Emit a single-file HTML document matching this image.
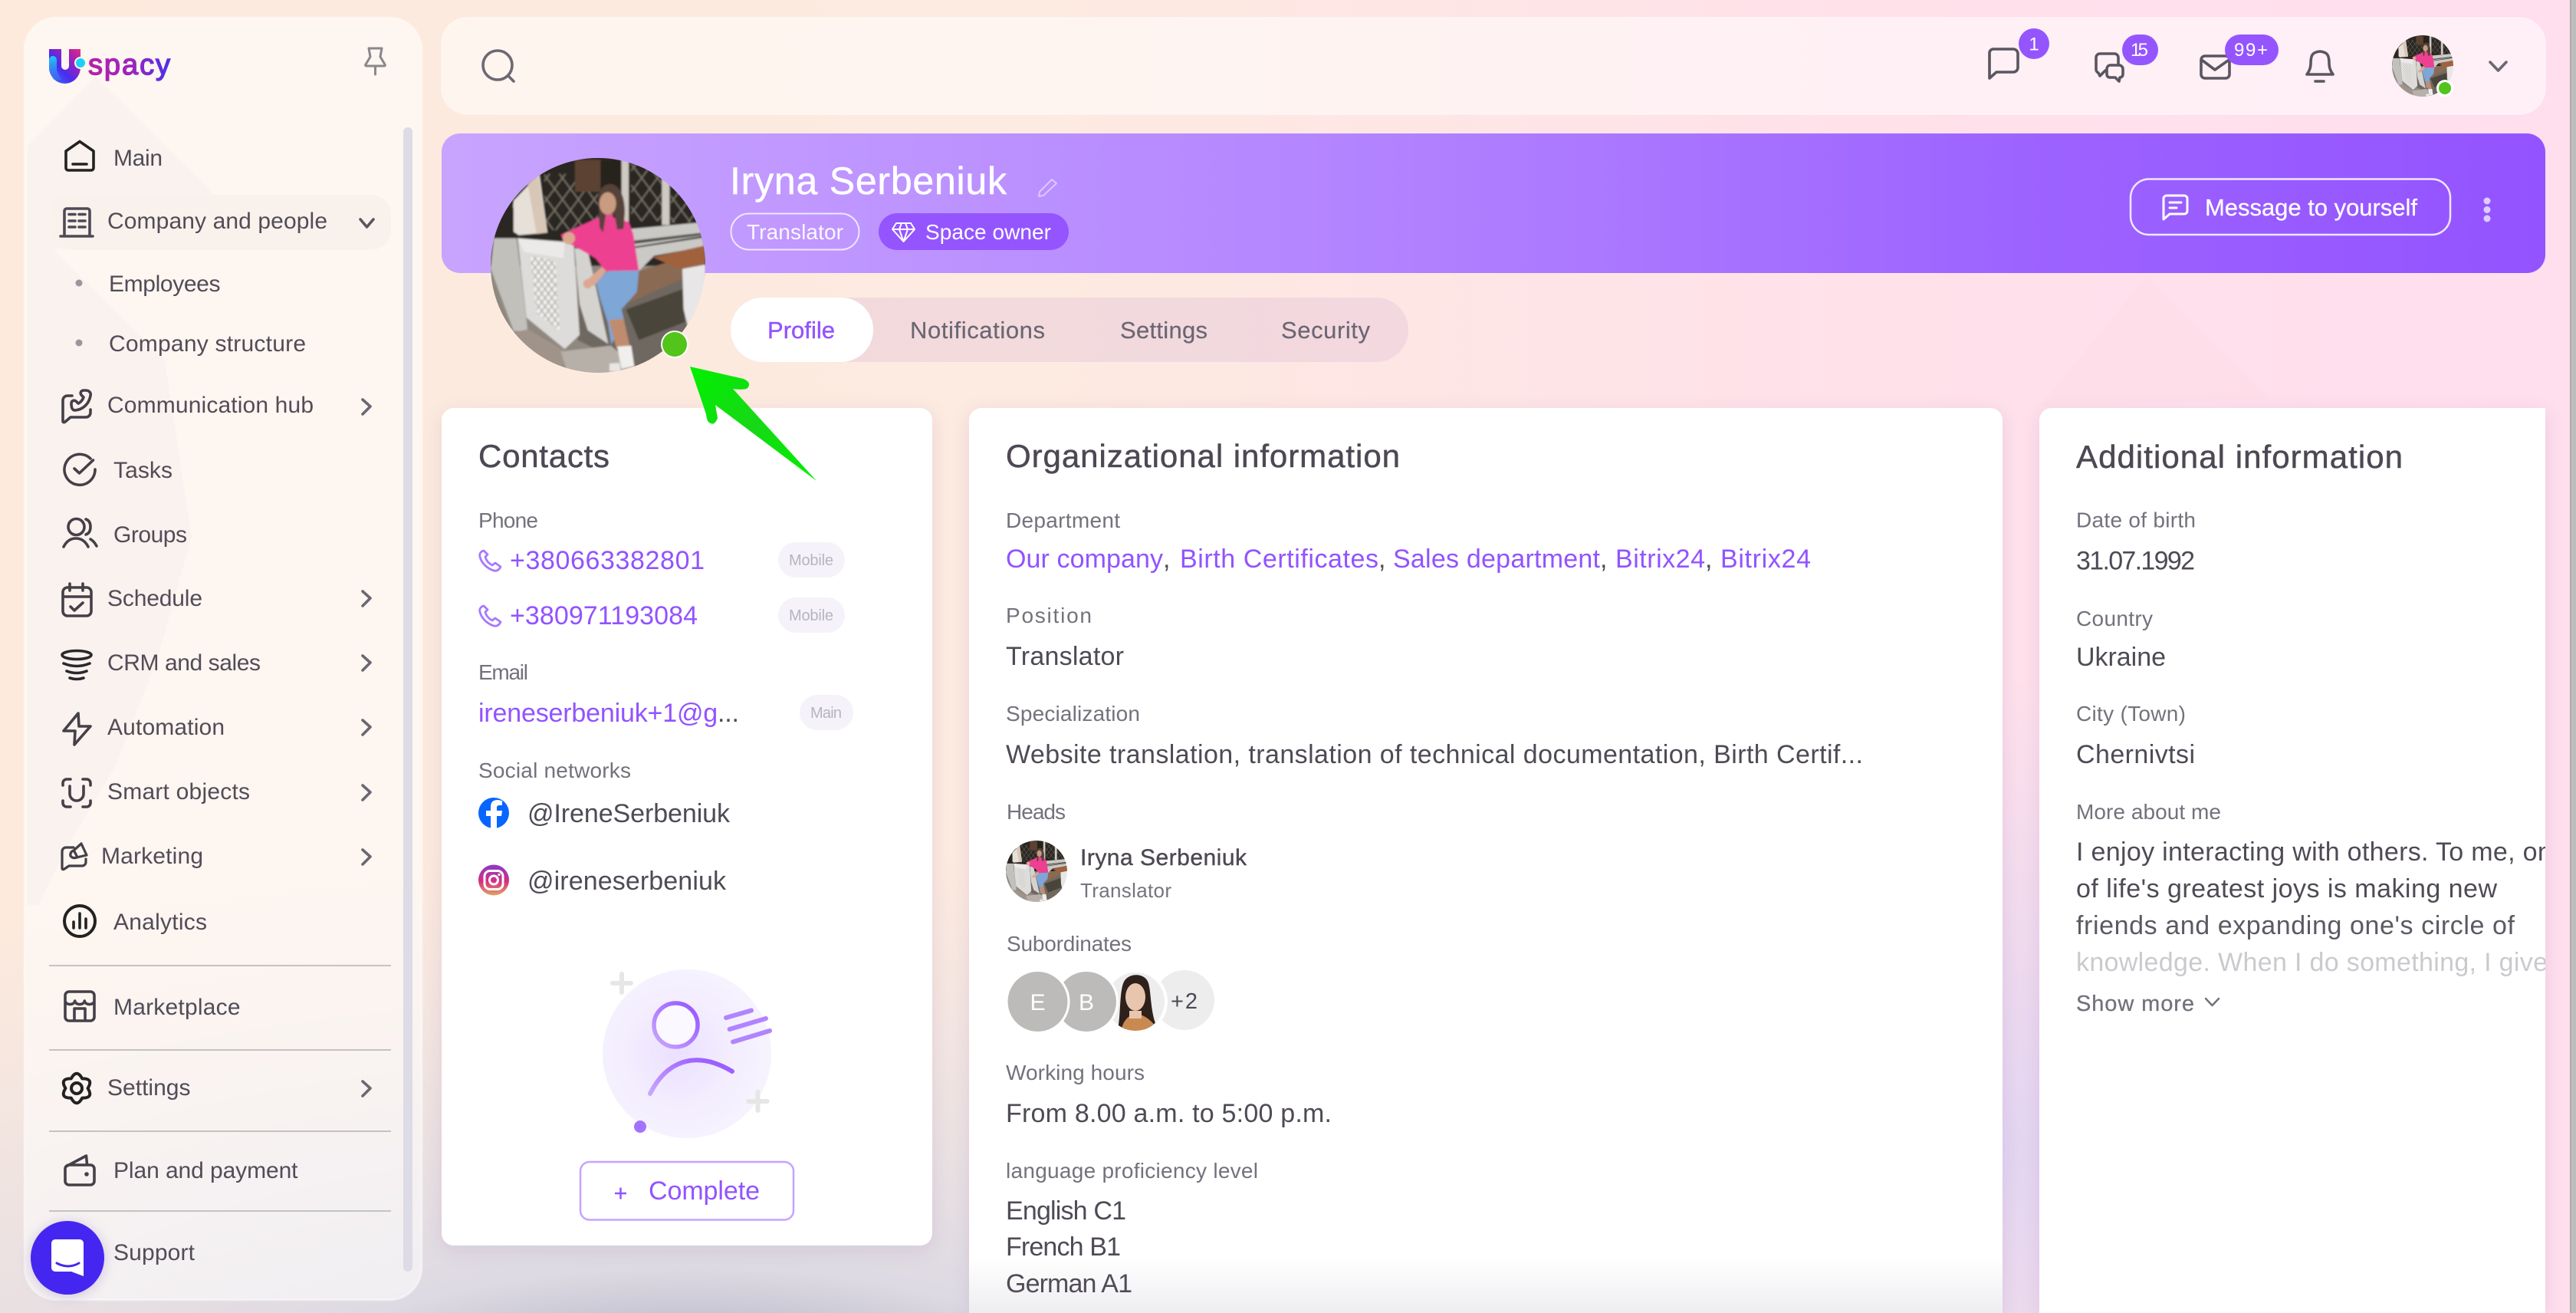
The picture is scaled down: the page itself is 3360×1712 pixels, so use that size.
<!DOCTYPE html>
<html lang="en">
<head>
<meta charset="utf-8">
<title>Uspacy profile</title>
<style>
html,body{margin:0;padding:0;width:3360px;height:1712px;overflow:hidden;background:#fdeadd}
svg{display:block;overflow:hidden}
text{font-family:"Liberation Sans",Arial,sans-serif;white-space:pre}
.n{font-size:30px;fill:#514c58}
.l{font-size:28px;fill:#75717c}
.v{font-size:34px;fill:#4f4a55}
.p{font-size:34px;fill:#9253ff}
.h{font-size:42px;fill:#4d4853;stroke:#4d4853;stroke-width:.5}
.t{font-size:20px;fill:#b8b4bf}
.b{font-size:24px;fill:#fff}
.ic{fill:none;stroke:#444048;stroke-width:3.6;stroke-linecap:round;stroke-linejoin:round}
.tb{fill:none;stroke:#5a5660;stroke-width:3.6;stroke-linecap:round;stroke-linejoin:round}
.ch{fill:none;stroke:#6b6772;stroke-width:3.6;stroke-linecap:round;stroke-linejoin:round}
</style>
</head>
<body>
<svg xmlns="http://www.w3.org/2000/svg" width="3360" height="1712" viewBox="0 0 3360 1712">
<defs>
  <linearGradient id="bgH" x1="0" x2="1" y1="0" y2="0">
    <stop offset="0" stop-color="#fdeadd"/><stop offset=".4" stop-color="#fdeae0"/>
    <stop offset=".72" stop-color="#ffe1ea"/><stop offset="1" stop-color="#ffdeee"/>
  </linearGradient>
  <radialGradient id="bgA" gradientUnits="userSpaceOnUse" cx="0" cy="0" r="1" gradientTransform="translate(900 1900) scale(2000 800)">
    <stop offset="0" stop-color="#bcbccb" stop-opacity="1"/>
    <stop offset=".235" stop-color="#c8c7d4" stop-opacity="1"/>
    <stop offset=".31" stop-color="#dcd9e3" stop-opacity=".95"/>
    <stop offset=".6" stop-color="#e2dde4" stop-opacity=".55"/>
    <stop offset="1" stop-color="#e8e0e4" stop-opacity="0"/>
  </radialGradient>
  <radialGradient id="bgB" gradientUnits="userSpaceOnUse" cx="2620" cy="1500" r="620">
    <stop offset="0" stop-color="#e0d4f2" stop-opacity=".9"/>
    <stop offset="1" stop-color="#e0d4f2" stop-opacity="0"/>
  </radialGradient>
  <linearGradient id="ban" x1="0" x2="1" y1="0" y2="0">
    <stop offset="0" stop-color="#c8a4ff"/><stop offset=".4" stop-color="#b587ff"/>
    <stop offset=".75" stop-color="#9d63ff"/><stop offset="1" stop-color="#9353ff"/>
  </linearGradient>
  <linearGradient id="logoU" x1="0" y1="1" x2="1" y2="0">
    <stop offset="0" stop-color="#3b7df5"/><stop offset=".4" stop-color="#4a2bf0"/>
    <stop offset=".8" stop-color="#b122a8"/><stop offset="1" stop-color="#e0308c"/>
  </linearGradient>
  <linearGradient id="logoC" x1="0" y1="0" x2="0" y2="1">
    <stop offset="0" stop-color="#1cd0f9"/><stop offset="1" stop-color="#3f7ef5" stop-opacity=".4"/>
  </linearGradient>
  <linearGradient id="logoT" gradientUnits="userSpaceOnUse" x1="115" x2="222" y1="0" y2="0">
    <stop offset="0" stop-color="#b621a6"/><stop offset=".55" stop-color="#9a25c0"/><stop offset="1" stop-color="#4a30ea"/>
  </linearGradient>
  <linearGradient id="arw" gradientUnits="userSpaceOnUse" x1="900" y1="478" x2="1065" y2="627">
    <stop offset="0" stop-color="#00f000"/><stop offset=".5" stop-color="#17d817"/><stop offset="1" stop-color="#00f000"/>
  </linearGradient>
  <linearGradient id="ill" x1="0" x2="1" y1="1" y2="0">
    <stop offset="0" stop-color="#c9a8ff"/><stop offset="1" stop-color="#9353ff"/>
  </linearGradient>
  <radialGradient id="blob" cx=".45" cy=".5" r=".55">
    <stop offset="0" stop-color="#ebe0ff"/><stop offset=".55" stop-color="#f3edfe"/><stop offset="1" stop-color="#f7f3fe"/>
  </radialGradient>
  <linearGradient id="ig" x1="0" x2="0" y1="0" y2="1">
    <stop offset="0" stop-color="#8a3ac8"/><stop offset=".55" stop-color="#d5307f"/><stop offset="1" stop-color="#e2a466"/>
  </linearGradient>
  <linearGradient id="fade" x1="0" x2="0" y1="0" y2="1">
    <stop offset="0" stop-color="#70708a" stop-opacity="0"/><stop offset="1" stop-color="#70708a" stop-opacity=".12"/>
  </linearGradient>
  <filter id="sh" x="-10%" y="-10%" width="120%" height="120%">
    <feDropShadow dx="0" dy="6" stdDeviation="12" flood-color="#50406a" flood-opacity=".10"/>
  </filter>
  <filter id="sh2" x="-30%" y="-30%" width="160%" height="160%">
    <feDropShadow dx="0" dy="2" stdDeviation="8" flood-color="#30208a" flood-opacity=".2"/>
  </filter>
  <filter id="soft" x="-5%" y="-5%" width="110%" height="110%"><feGaussianBlur stdDeviation="3.500"/></filter>
  <clipPath id="addc"><rect x="2660" y="532" width="660" height="1180"/></clipPath>
  <clipPath id="pc"><circle cx="480" cy="468" r="420"/></clipPath>
  <clipPath id="subc"><circle cx="1481" cy="1306" r="38"/></clipPath>
  <pattern id="lat" width="62" height="84" patternUnits="userSpaceOnUse">
    <path d="M0 0L62 84M62 0L0 84" stroke="#7b766a" stroke-width="5" fill="none"/>
  </pattern>
  <pattern id="lat2" width="26" height="34" patternUnits="userSpaceOnUse">
    <path d="M0 0L26 34M26 0L0 34" stroke="#b5b2ae" stroke-width="5" fill="none"/>
  </pattern>
  <symbol id="photo" viewBox="60 48 840 840">
    <g clip-path="url(#pc)">
    <g filter="url(#soft)">
      <rect x="50" y="40" width="860" height="450" fill="#2a2620"/>
      <rect x="50" y="470" width="860" height="430" fill="#8e8880"/>
      <rect x="270" y="110" width="210" height="220" fill="url(#lat)"/>
      <rect x="390" y="55" width="100" height="125" fill="#5c4330"/>
      <rect x="610" y="70" width="120" height="225" fill="url(#lat)"/>
      <rect x="765" y="170" width="110" height="130" fill="url(#lat)"/>
      <rect x="490" y="60" width="85" height="180" fill="#27231e"/>
      <path d="M572 50h28v260h-28zM730 100h30v210h-30z" fill="#cfcac2"/>
      <path d="M140 330L150 215 250 110 282 340 170 350Z" fill="#e6e0d9"/>
      <path d="M205 150L245 112 280 340 240 345Z" fill="#d8c6b6"/>
      <path d="M100 340L150 240 150 340Z" fill="#2a2620"/>
      <path d="M60 480L72 362 162 362 205 725 150 725Z" fill="#c2c0bb"/>
      <path d="M400 520L900 460 900 760 640 880 400 760Z" fill="#6e6860"/>
      <path d="M590 640L815 560 820 690 640 760Z" fill="#4a443b"/>
      <path d="M610 325L885 300 892 352 620 395ZM625 400L890 360 895 395 700 430 640 490Z" fill="#cbc9c6"/>
      <path d="M612 372L890 340 892 350 615 385Z" fill="#55504a"/>
      <path d="M640 490L805 440 810 520 600 615 585 585Z" fill="#8a6a52"/>
      <path d="M695 436L900 390 900 462 800 482Z" fill="#a0623c"/>
      <path d="M810 482L900 465 900 600 835 720 815 640Z" fill="#e8e6e6"/>
      <path d="M165 362L385 378 408 740 350 795 200 672Z" fill="#dedcda"/>
      <path d="M165 362L350 380 345 440 190 415Z" fill="#eceae8"/>
      <path d="M215 430L312 450 330 725 240 655Z" fill="#f3f1ef"/>
      <path d="M215 430L312 450 330 725 240 655Z" fill="url(#lat2)"/>
      <path d="M388 400L440 410 520 775 440 722 408 620Z" fill="#d5d3d0"/>
      <path d="M155 730L205 718 345 800 345 880 240 860Z" fill="#a0948a"/>
      <path d="M335 805L530 782 625 862 560 892 360 892Z" fill="#b7b0a8"/>
      <path d="M335 348L480 282 505 270 600 298 618 345 640 492 510 490 470 440 400 400 345 372Z" fill="#ee3f90"/>
      <path d="M482 210C484 165 505 150 530 150 565 152 585 200 585 260L580 325 555 328 545 270 510 270 500 340 486 320Z" fill="#55433a"/>
      <ellipse cx="518" cy="226" rx="33" ry="44" fill="#c99b80"/>
      <path d="M510 268h28v20h-28z" fill="#e34b8e"/>
      <circle cx="366" cy="362" r="24" fill="#dba78f"/>
      <path d="M468 522L522 490 640 488 632 572 572 640 582 682 532 778 518 690 490 605Z" fill="#7ea6d6"/>
      <path d="M425 535L495 475 512 490 465 548Z" fill="#dba78f"/>
      <circle cx="440" cy="540" r="18" fill="#dba78f"/>
      <path d="M522 682L580 676 604 782 552 792Z" fill="#c08c70"/>
      <path d="M555 786L610 782 622 862 572 872Z" fill="#f1efee"/>
      <path d="M525 852L565 850 568 882 525 882Z" fill="#e9e7e6"/>
    </g>
    </g>
  </symbol>
</defs>

<!-- background -->
<rect width="3360" height="1712" fill="url(#bgH)"/>
<rect width="3360" height="1712" fill="url(#bgB)"/>
<rect x="0" y="1100" width="3360" height="612" fill="url(#bgA)"/>
<path d="M2660 530L2800 360 2960 520Z" fill="#f5d8e0" opacity=".15"/>

<!-- sidebar -->
<rect x="32" y="23" width="518" height="1672" rx="42" fill="#fff" fill-opacity=".55" stroke="#fff" stroke-opacity=".4" stroke-width="3"/>
<path d="M39 187L125 100 280 254 70 326 215 470 250 700 205 860 150 1000 90 1100 50 1180 36 1180 36 190Z" fill="#ece6e6" opacity=".2"/>
<rect x="64" y="254" width="446" height="72" rx="26" fill="#f9f2ec"/>
<rect x="526" y="166" width="12" height="1492" rx="6" fill="#dcdbe6"/>

<!-- logo -->
<path d="M64 64H80V86a5 5 0 0 0 10 0V64H105V88a20.500 21 0 0 1-41 0Z" fill="url(#logoU)"/>
<path d="M64 78a5 5 0 0 1 10 0V92L80 104 70 104 64 92Z" fill="url(#logoC)"/>
<circle cx="105" cy="82" r="8" fill="#fff6ee"/>
<circle cx="105" cy="82" r="6" fill="#1cd0f9"/>
<text x="115" y="97" font-size="38" fill="url(#logoT)" stroke="url(#logoT)" stroke-width="1.400" textLength="107">spacy</text>
<path d="M481 63H498L496 74 502 84a1.200 1.200 0 0 1-1 2H478a1.200 1.200 0 0 1-1-2L483 74Z M489.500 86V97" fill="none" stroke="#8a878c" stroke-width="3" stroke-linejoin="round" stroke-linecap="round"/>

<!-- nav -->
<path class="ic" style="stroke:#222" d="M104 184.500L122 197V219a3 3 0 0 1-3 3H89a3 3 0 0 1-3-3V197ZM95 214H113"/>
<text class="n" x="148" y="216" textLength="64">Main</text>

<path class="ic" style="stroke:#4f4a57" d="M84 308V275a3 3 0 0 1 3-3H114a3 3 0 0 1 3 3V308M79 308H121M90 279.500H98M103 279.500H111M90 288H98M103 288H111M90 296H98M103 296H111"/>
<text class="n" x="140" y="298" textLength="287">Company and people</text>
<path class="ch" style="stroke:#5a5660" d="M470 286L478.500 296 487 286"/>

<circle cx="103" cy="369" r="4.500" fill="#9a969e"/>
<text class="n" x="142" y="380" textLength="145.500">Employees</text>
<circle cx="103" cy="447" r="4.500" fill="#9a969e"/>
<text class="n" x="142" y="458" textLength="257">Company structure</text>

<path class="ic" d="M94 516H88a6 6 0 0 0-6 6V549c0 2 2 2 3 1L92 544H112a6 6 0 0 0 6-6V534M93 526c0-3 3-5 6-3l3 3c3-1 6-5 7-8l-3-3c-2-3 0-6 3-6h3c4 0 7 3 6 7-2 11-10 18-20 19-3 0-5-2-5-9Z"/>
<text class="n" x="140" y="538" textLength="269">Communication hub</text>
<path class="ch" d="M473 521L483 530 473 540"/>

<path class="ic" d="M118 598A20 20 0 1 0 124 612M97 611L103.500 617 121.500 600"/>
<text class="n" x="148" y="623" textLength="77">Tasks</text>

<path class="ic" d="M110 687a10.500 10.500 0 1 1-21 0 10.500 10.500 0 1 1 21 0M112 677q6 2 6 10t-6 10M83 713c4-8 10-11 16-11s12 3 16 11M118 703q5 3 8 9"/>
<text class="n" x="148" y="707" textLength="96">Groups</text>

<path class="ic" d="M88 766H113a6 6 0 0 1 6 6V797a6 6 0 0 1-6 6H88a6 6 0 0 1-6-6V772a6 6 0 0 1 6-6ZM82 778H119M91 761V770M108 761V770M92 791L97 796 108 786"/>
<text class="n" x="140" y="790" textLength="124">Schedule</text>
<path class="ch" d="M473 771L483 780 473 790"/>

<path class="ic" style="stroke:#2a282c" d="M119 854a19 5.500 0 1 1-38 0 19 5.500 0 1 1 38 0M83 865q17 7 34 0M87 875q13 5 26 0M91 884q9 3 18 0"/>
<text class="n" x="140" y="874" textLength="200">CRM and sales</text>
<path class="ch" d="M473 855L483 864 473 874"/>

<path class="ic" d="M102 930L83 953H98L97 971 118 947H103Z"/>
<text class="n" x="140" y="958" textLength="153">Automation</text>
<path class="ch" d="M473 939L483 948 473 958"/>

<path class="ic" d="M82 1024V1021a5 5 0 0 1 5-5H92M108 1016h5a5 5 0 0 1 5 5v3M82 1044v3a5 5 0 0 0 5 5h5M118 1044v3a5 5 0 0 1-5 5h-5M91 1025V1035a9 9 0 0 0 18 0V1025"/>
<text class="n" x="140" y="1042" textLength="186">Smart objects</text>
<path class="ch" d="M473 1024L483 1033 473 1043"/>

<path class="ic" style="stroke-width:3.200" d="M96 1105H86a5 5 0 0 0-5 5V1132c0 2 2 2 3 1L90 1129H107a5 5 0 0 0 5-5V1120M92 1116q-1-5 4-7L106 1100 113 1115 100 1118q-5 2-8-2ZM97 1110L101 1118"/>
<text class="n" x="132" y="1126" textLength="133">Marketing</text>
<path class="ch" d="M473 1108L483 1117 473 1127"/>

<circle cx="104" cy="1201" r="20" fill="none" stroke="#222" stroke-width="4"/>
<path class="ic" style="stroke:#222" d="M96 1202V1210M104 1191V1210M112 1198V1210"/>
<text class="n" x="148" y="1212" textLength="122">Analytics</text>
<rect x="64" y="1258" width="446" height="2" fill="#c5c2c2"/>

<path class="ic" d="M90 1293H118a5 5 0 0 1 5 5V1326a5 5 0 0 1-5 5H90a5 5 0 0 1-5-5V1298a5 5 0 0 1 5-5ZM85 1302v3a6.300 4.500 0 0 0 12.700 0 6.300 4.500 0 0 0 12.600 0 6.300 4.500 0 0 0 12.700 0v-3M97 1331V1315H111V1331"/>
<text class="n" x="148" y="1323" textLength="165.500">Marketplace</text>
<rect x="64" y="1368" width="446" height="2" fill="#c5c2c2"/>

<path class="ic" style="stroke:#222;stroke-width:4" d="M92.750 1406.400Q100 1393 107.250 1406.400 122.500 1406 114.500 1419 122.500 1432 107.250 1431.600 100 1445 92.750 1431.600 77.500 1432 85.500 1419 77.500 1406 92.750 1406.400Z"/>
<circle cx="100" cy="1419" r="7" fill="none" stroke="#222" stroke-width="4"/>
<text class="n" x="140" y="1428" textLength="108.500">Settings</text>
<path class="ch" d="M473 1410L483 1419 473 1429"/>
<rect x="64" y="1474" width="446" height="2" fill="#c5c2c2"/>

<path class="ic" d="M90 1519H118a5 5 0 0 1 5 5V1540a5 5 0 0 1-5 5H90a5 5 0 0 1-5-5V1524a5 5 0 0 1 5-5ZM86 1521L112.500 1507 113.500 1518"/>
<circle cx="113" cy="1531" r="2.800" fill="#444048"/>
<text class="n" x="148" y="1536" textLength="240.500">Plan and payment</text>
<rect x="64" y="1578" width="446" height="2" fill="#c5c2c2"/>

<text class="n" x="148" y="1643" textLength="106">Support</text>
<circle cx="88" cy="1640" r="48" fill="#4526f0" filter="url(#sh2)"/>
<path d="M72 1616H104a5 5 0 0 1 5 5V1664L93 1658H72a5 5 0 0 1-5-5V1621a5 5 0 0 1 5-5Z" fill="#fff"/>
<path d="M74 1647q15 8 29 0" fill="none" stroke="#4526f0" stroke-width="3" stroke-linecap="round"/>

<!-- topbar -->
<rect x="576" y="23" width="2744" height="126" rx="34" fill="#fff" fill-opacity=".5" stroke="#fff" stroke-opacity=".35" stroke-width="2"/>
<circle cx="649" cy="85" r="19" fill="none" stroke="#6d6873" stroke-width="3.600"/>
<path d="M663 99L670 106" stroke="#6d6873" stroke-width="3.600" stroke-linecap="round"/>

<path class="tb" d="M2600 64H2626a6 6 0 0 1 6 6V88a6 6 0 0 1-6 6H2604L2595 102V69a5 5 0 0 1 5-5Z"/>
<circle cx="2653" cy="57" r="20" fill="#9455ff"/>
<text class="b" x="2653" y="65.500" text-anchor="middle">1</text>

<path class="tb" d="M2763 85V75a5 5 0 0 0-5-5H2739a5 5 0 0 0-5 5V90a5 5 0 0 0 3 5L2739 99 2746 92"/>
<path class="tb" d="M2752 85H2764a5 5 0 0 1 5 5V97a4 4 0 0 1-4 4L2764 106 2759 101H2752a4 4 0 0 1-4-4V90a5 5 0 0 1 4-5Z" fill="#fff0f5"/>
<rect x="2768" y="45" width="47" height="40" rx="20" fill="#9455ff"/>
<text class="b" x="2779" y="73" textLength="23">15</text>

<rect class="tb" x="2871" y="73" width="37" height="29" rx="5"/>
<path class="tb" d="M2873 79L2889 91 2906 79"/>
<rect x="2902" y="45" width="70" height="40" rx="20" fill="#9455ff"/>
<text class="b" x="2914" y="73" textLength="44">99+</text>

<path class="tb" d="M3009 97c3-4 5-8 5-14 0-11 2-15 12-16 10 1 12 5 12 16 0 6 2 10 5 14Z M3020 106H3031"/>

<use href="#photo" x="3120" y="46" width="80" height="80"/>
<circle cx="3189" cy="115" r="11" fill="#fff"/>
<circle cx="3189" cy="115" r="8" fill="#52c41a"/>
<path class="ch" d="M3248 81L3258.500 92 3269 81"/>

<!-- banner -->
<rect x="576" y="174" width="2744" height="182" rx="24" fill="url(#ban)"/>
<text x="952" y="253" font-size="50" fill="#fff" stroke="#fff" stroke-width=".5" textLength="361">Iryna Serbeniuk</text>
<path d="M1372 234l6 5-17 16-6 1 1-6Z" fill="none" stroke="#fff" stroke-opacity=".5" stroke-width="2" stroke-linejoin="round"/>
<rect x="953.500" y="278.500" width="167" height="47" rx="23.500" fill="none" stroke="#fff" stroke-opacity=".75" stroke-width="2"/>
<text x="974" y="312" font-size="28" fill="#fff" fill-opacity=".92" textLength="126">Translator</text>
<rect x="1146" y="278" width="248" height="48" rx="24" fill="#9455ff"/>
<path d="M1169 291H1188L1193 299 1178.500 315 1164 299ZM1164 299H1193M1173 299L1178.500 315 1184 299M1173 299L1176 291M1184 299L1181 291" fill="none" stroke="#fff" stroke-width="2" stroke-linejoin="round"/>
<text x="1207" y="312" font-size="28" fill="#fff" textLength="164">Space owner</text>

<rect x="2779" y="233.500" width="417" height="72.500" rx="24" fill="none" stroke="#fff" stroke-opacity=".85" stroke-width="2.500"/>
<path d="M2826 255H2849a4 4 0 0 1 4 4V275a4 4 0 0 1-4 4H2830L2822 286V259a4 4 0 0 1 4-4ZM2830 264H2845M2830 271H2839" fill="none" stroke="#fff" stroke-width="3" stroke-linejoin="round" stroke-linecap="round"/>
<text x="2876" y="281" font-size="31" fill="#fff" stroke="#fff" stroke-width=".3" textLength="277">Message to yourself</text>
<circle cx="3244" cy="262" r="4.500" fill="#e0ccff"/><circle cx="3244" cy="273.500" r="4.500" fill="#e0ccff"/><circle cx="3244" cy="285" r="4.500" fill="#e0ccff"/>

<!-- avatar -->
<use href="#photo" x="640" y="206" width="280" height="280"/>
<circle cx="880" cy="449" r="18" fill="#fff"/>
<circle cx="880" cy="449" r="16" fill="#52c41a"/>

<!-- tabs -->
<rect x="953" y="388" width="884" height="84" rx="42" fill="#e8c9da" fill-opacity=".5"/>
<rect x="953" y="388" width="186" height="84" rx="42" fill="#fff"/>
<text x="1001" y="441" font-size="31" fill="#9253ff" stroke="#9253ff" stroke-width=".4" textLength="88">Profile</text>
<text x="1187" y="441" font-size="31" fill="#6b6672" stroke="#6b6672" stroke-width=".2" textLength="176">Notifications</text>
<text x="1461" y="441" font-size="31" fill="#6b6672" stroke="#6b6672" stroke-width=".2" textLength="114">Settings</text>
<text x="1671" y="441" font-size="31" fill="#6b6672" stroke="#6b6672" stroke-width=".2" textLength="116">Security</text>

<!-- contacts card -->
<rect x="576" y="532" width="640" height="1092" rx="16" fill="#fff" filter="url(#sh)"/>
<text class="h" x="624" y="609" textLength="171">Contacts</text>
<text class="l" x="624" y="688" textLength="78">Phone</text>
<path d="M631 718c-4 1-6 4-5 8 2 8 9 15 18 18 4 1 7-1 9-5l-7-5-4 3c-4-2-8-6-9-11l3-3Z" fill="none" stroke="#a678ff" stroke-width="2.800" stroke-linejoin="round"/>
<text class="p" x="665" y="742" textLength="254">+380663382801</text>
<rect x="1015" y="707" width="87" height="46" rx="23" fill="#f5f3f9"/>
<text class="t" x="1029" y="737" textLength="58">Mobile</text>
<path d="M631 790c-4 1-6 4-5 8 2 8 9 15 18 18 4 1 7-1 9-5l-7-5-4 3c-4-2-8-6-9-11l3-3Z" fill="none" stroke="#a678ff" stroke-width="2.800" stroke-linejoin="round"/>
<text class="p" x="665" y="814" textLength="245">+380971193084</text>
<rect x="1015" y="779" width="87" height="46" rx="23" fill="#f5f3f9"/>
<text class="t" x="1029" y="809" textLength="58">Mobile</text>
<text class="l" x="624" y="886" textLength="65">Email</text>
<text class="p" x="624" y="941" textLength="340">ireneserbeniuk+1@g<tspan fill="#4d4853">...</tspan></text>
<rect x="1043" y="906" width="70" height="46" rx="23" fill="#f5f3f9"/>
<text class="t" x="1057" y="936" textLength="41">Main</text>
<text class="l" x="624" y="1014" textLength="199">Social networks</text>
<circle cx="644" cy="1060" r="20" fill="#0866ff"/>
<path d="M648 1080V1064h6l1-7h-7v-4c0-2 1-3 4-3h3v-6c-2 0-4-1-6-1-6 0-9 3-9 9v5h-6v7h6v16Z" fill="#fff"/>
<text class="v" x="688" y="1072" textLength="264">@IreneSerbeniuk</text>
<circle cx="644" cy="1147.500" r="20" fill="url(#ig)"/>
<rect x="632" y="1135.500" width="24" height="24" rx="7" fill="none" stroke="#fff" stroke-width="3"/>
<circle cx="644" cy="1147.500" r="5.500" fill="none" stroke="#fff" stroke-width="3"/>
<circle cx="651" cy="1140.500" r="1.600" fill="#fff"/>
<text class="v" x="688" y="1160" textLength="259">@ireneserbeniuk</text>

<!-- illustration -->
<circle cx="896" cy="1374" r="110" fill="url(#blob)"/>
<path d="M811 1270V1294M799 1282H823M988.500 1424V1448M976.500 1436H1000.500" stroke="#e6e6e6" stroke-width="6" stroke-linecap="round"/>
<circle cx="881.500" cy="1336.500" r="28.500" fill="#fbf9ff" stroke="url(#ill)" stroke-width="5.500"/>
<path d="M848 1426C868 1386 905 1367 955 1397" fill="none" stroke="url(#ill)" stroke-width="6" stroke-linecap="round"/>
<path d="M947 1327L980 1317.500M951.600 1342L999 1328M956 1358.500L1004 1344" fill="none" stroke="#b184ff" stroke-width="6" stroke-linecap="round"/>
<circle cx="835" cy="1469" r="8" fill="#a173ff"/>
<rect x="757" y="1515" width="278" height="75.500" rx="12" fill="#fff" stroke="#c6a3ff" stroke-width="2.500"/>
<path d="M802 1556H817M809.500 1548.500V1563.500" stroke="#9253ff" stroke-width="2.500"/>
<text class="p" x="846" y="1564" textLength="145">Complete</text>

<!-- org card -->
<path d="M1280 532H2596a16 16 0 0 1 16 16V1712H1264V548a16 16 0 0 1 16-16Z" fill="#fff" filter="url(#sh)"/>
<text class="h" x="1312" y="609" textLength="514">Organizational information</text>
<text class="l" x="1312" y="688" textLength="149">Department</text>
<text class="p" x="1312" y="740" textLength="205">Our company</text><text class="v" x="1517" y="740">,</text>
<text class="p" x="1539" y="740" textLength="259">Birth Certificates</text><text class="v" x="1798" y="740">,</text>
<text class="p" x="1817" y="740" textLength="270">Sales department</text><text class="v" x="2087" y="740">,</text>
<text class="p" x="2107" y="740" textLength="117">Bitrix24</text><text class="v" x="2224" y="740">,</text>
<text class="p" x="2244" y="740" textLength="118">Bitrix24</text>
<text class="l" x="1312" y="812" textLength="112">Position</text>
<text class="v" x="1312" y="867" textLength="154">Translator</text>
<text class="l" x="1312" y="940" textLength="175">Specialization</text>
<text class="v" x="1312" y="995" textLength="1118">Website translation, translation of technical documentation, Birth Certif...</text>
<text class="l" x="1313" y="1068" textLength="77">Heads</text>
<use href="#photo" x="1312" y="1096" width="80" height="80"/>
<text x="1409" y="1128" font-size="30" fill="#4d4853" stroke="#4d4853" stroke-width=".4" textLength="217">Iryna Serbeniuk</text>
<text x="1409" y="1170" font-size="26" fill="#77737d" textLength="119">Translator</text>
<text class="l" x="1313" y="1240" textLength="163">Subordinates</text>

<circle cx="1545" cy="1304" r="39" fill="#ededed"/>
<text x="1527" y="1315" font-size="29" fill="#4d4853" textLength="35">+2</text>
<circle cx="1481" cy="1306" r="42" fill="#fff"/>
<g clip-path="url(#subc)">
  <rect x="1440" y="1264" width="84" height="84" fill="#ededed"/>
  <path d="M1458 1342c4-20 2-50 8-62 6-12 28-12 32 2 4 14 2 38 12 60Z" fill="#2e201b"/>
  <ellipse cx="1481" cy="1300" rx="13" ry="18" fill="#e8c6ae"/>
  <path d="M1462 1346c2-16 12-24 20-24s22 8 30 24Z" fill="#c98a52"/>
  <path d="M1473 1318h16v10h-16z" fill="#e8c6ae"/>
</g>
<circle cx="1417" cy="1306" r="42" fill="#fff"/>
<circle cx="1417" cy="1306" r="39" fill="#bdbbb9"/>
<text x="1417" y="1317" font-size="30" fill="#fff" text-anchor="middle">B</text>
<circle cx="1353.500" cy="1306" r="42" fill="#fff"/>
<circle cx="1353.500" cy="1306" r="39" fill="#bdbbb9"/>
<text x="1353.500" y="1317" font-size="30" fill="#fff" text-anchor="middle">E</text>

<text class="l" x="1312" y="1408" textLength="181">Working hours</text>
<text class="v" x="1312" y="1463" textLength="425">From 8.00 a.m. to 5:00 p.m.</text>
<text class="l" x="1312" y="1536" textLength="329">language proficiency level</text>
<text class="v" x="1312" y="1590" textLength="157">English C1</text>
<text class="v" x="1312" y="1637" textLength="150">French B1</text>
<text class="v" x="1312" y="1685" textLength="165">German A1</text>

<!-- additional card -->
<path d="M2676 532H3320V1712H2660V548a16 16 0 0 1 16-16Z" fill="#fff" filter="url(#sh)"/>
<g clip-path="url(#addc)">
<text class="h" x="2708" y="610" textLength="426">Additional information</text>
<text class="l" x="2708" y="687.500" textLength="156">Date of birth</text>
<text class="v" x="2708" y="742.500" textLength="155">31.07.1992</text>
<text class="l" x="2708" y="816" textLength="100">Country</text>
<text class="v" x="2708" y="868" textLength="117">Ukraine</text>
<text class="l" x="2708" y="940" textLength="143">City (Town)</text>
<text class="v" x="2708" y="995" textLength="155">Chernivtsi</text>
<text class="l" x="2708" y="1068" textLength="189">More about me</text>
<text class="v" x="2708" y="1122" textLength="640">I enjoy interacting with others. To me, one</text>
<text class="v" x="2708" y="1170" textLength="549">of life's greatest joys is making new</text>
<text class="v" x="2708" y="1218" textLength="572" style="fill:#5d5962">friends and expanding one's circle of</text>
<text class="v" x="2708" y="1266" textLength="615" style="fill:#cbc9ce">knowledge. When I do something, I give</text>
<text x="2708" y="1318" font-size="29" fill="#75717c" stroke="#75717c" stroke-width=".3" textLength="154">Show more</text>
<path d="M2877 1302L2885.500 1311 2894 1302" fill="none" stroke="#75717c" stroke-width="2.500" stroke-linecap="round" stroke-linejoin="round"/>
</g>

<!-- bottom fade on org card -->
<rect x="1264" y="1640" width="1348" height="72" fill="url(#fade)"/>

<!-- green arrow -->
<path d="M900 478L970 494Q981 499 975 506 972 509 956 507L1065 627 933 528 936 545Q932 556 925 551 922 549 921 540Z" fill="url(#arw)"/>

<!-- right edge -->
<rect x="3352" y="0" width="8" height="1712" fill="#bdbdbd"/>
<rect x="3352" y="0" width="1.500" height="1712" fill="#a6a6a6"/>
</svg>
</body>
</html>
